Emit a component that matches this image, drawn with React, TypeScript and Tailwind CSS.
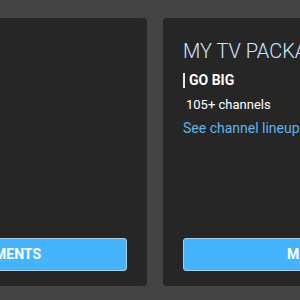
import React from "react";

export default function App() {
  return (
    <div
      className="w-[300px] h-[300px] overflow-hidden bg-[#444444] pt-[18px] flex gap-[16px]"
      style={{ fontFamily: "Roboto, 'Open Sans', sans-serif" }}
    >
      <div className="shrink-0 w-[354px] h-[268px] ml-[-207px] bg-[#262626] rounded-[4px] flex flex-col px-[20px] pb-[15px]">
        <button className="mt-auto h-[33px] w-full pl-[8px] rounded-[3px] bg-[#45b4fd] border border-[#a9cde6] text-white text-[14px] font-bold">
          MANAGE PAYMENTS
        </button>
      </div>
      <div className="shrink-0 w-[372px] h-[268px] bg-[#262626] rounded-[4px] flex flex-col px-[20px] pb-[15px]">
        <div className="pt-[20px] text-[20px] leading-[26px] font-light text-[#cfe7ff] whitespace-nowrap">
          MY TV PACKAGE
        </div>
        <div className="mt-[8px] flex items-center h-[16px]">
          <div className="w-[2px] h-[15px] bg-[#e6e6e6] mr-[4px]" />
          <div className="text-[14px] font-bold text-white leading-[16px]">GO BIG</div>
        </div>
        <div className="mt-[8px] pl-[3px] text-[13px] text-white leading-[18px]">105+ channels</div>
        <div className="mt-[4px] text-[14px] text-[#61b3ee] leading-[20px] whitespace-nowrap">See channel lineup</div>
        <button className="mt-auto h-[33px] w-full rounded-[3px] bg-[#45b4fd] border border-[#a9cde6] text-white text-[14px] font-bold">
          MANAGE PACKAGE
        </button>
      </div>
    </div>
  );
}
